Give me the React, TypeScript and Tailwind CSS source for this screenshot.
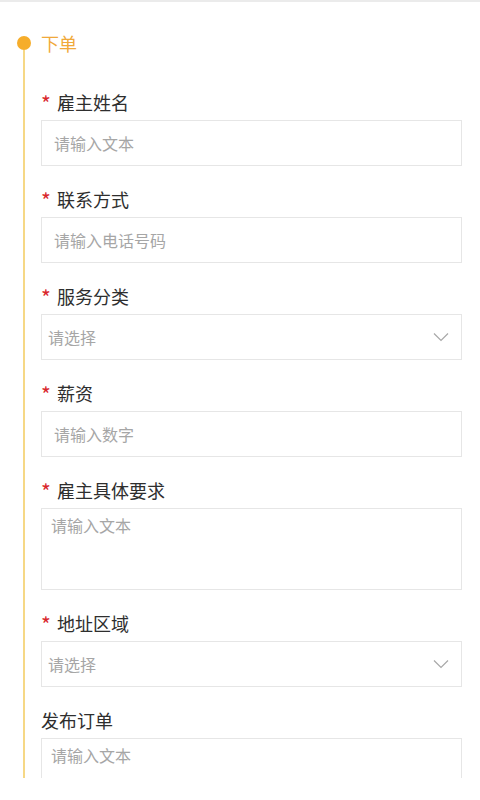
import React from 'react';

const font = { fontFamily: '"Noto Sans CJK SC", "Noto Sans", sans-serif' };

type Field = { label: string; required?: boolean; kind: 'input' | 'select' | 'textarea'; placeholder: string; tall?: boolean };

const fields: Field[] = [
    { label: '雇主姓名', required: true, kind: 'input', placeholder: '请输入文本' },
    { label: '联系方式', required: true, kind: 'input', placeholder: '请输入电话号码' },
    { label: '服务分类', required: true, kind: 'select', placeholder: '请选择' },
    { label: '薪资', required: true, kind: 'input', placeholder: '请输入数字' },
    { label: '雇主具体要求', required: true, kind: 'textarea', placeholder: '请输入文本', tall: true },
    { label: '地址区域', required: true, kind: 'select', placeholder: '请选择' },
    { label: '发布订单', kind: 'textarea', placeholder: '请输入文本' },
];

const Chevron = () => (
    <svg width="16" height="10" viewBox="0 0 16 10" fill="none">
        <polyline points="1,1.5 8,8.5 15,1.5" stroke="#a8a8a8" strokeWidth="1.2" strokeLinejoin="miter" />
    </svg>
);

const FieldBox = ({ f }: { f: Field }) => {
    if (f.kind === 'select') {
        return (
            <div className="h-[46px] w-[421px] border border-[#e6e6e6] flex items-center justify-between pl-[6px] pr-[12px] bg-white">
                <span className="text-[16px] leading-[22px] text-[#a6a6a6]">{f.placeholder}</span>
                <Chevron />
            </div>
        );
    }
    if (f.kind === 'textarea') {
        return (
            <textarea
                readOnly
                placeholder={f.placeholder}
                style={font}
                className={`block w-[421px] ${f.tall ? 'h-[82px]' : 'h-[60px]'} border border-[#e6e6e6] pl-[9px] pt-[5px] text-[16px] leading-[22px] resize-none outline-none placeholder:text-[#a6a6a6] bg-white`}
            />
        );
    }
    return (
        <input
            readOnly
            placeholder={f.placeholder}
            style={font}
            className="block h-[46px] w-[421px] border border-[#e6e6e6] px-[12px] text-[16px] outline-none placeholder:text-[#a6a6a6] bg-white"
        />
    );
};

export default function App() {
    return (
        <div style={font} className="w-[480px] h-[800px] bg-white border-t-[2px] border-[#ebebeb]">
            <div className="h-[776px] overflow-hidden flex">
                {/* timeline */}
                <div className="w-[41px] shrink-0 flex flex-col pl-[17px] pt-[34px]">
                    <div className="w-[14px] h-[14px] rounded-full bg-[#f6ad2b]" />
                    <div className="w-[2px] ml-[6px] flex-1 bg-[#f6d886]" />
                </div>

                <div className="flex-1 pt-[29px]">
                    <div className="h-[24px] flex items-center text-[18px] leading-[24px] text-[#f0a93a]">下单</div>

                    <div className="mt-[35px] flex flex-col gap-[21px]">
                        {fields.map((f) => (
                            <div key={f.label} className="flex flex-col">
                                <div className="h-[24px] flex items-center text-[18px] leading-[24px] text-[#2e2e2e]">
                                    {f.required && <span className="text-[#d9262c] w-[16px] text-[21px] leading-[24px] mt-[1px]">*</span>}
                                    <span>{f.label}</span>
                                </div>
                                <div className="mt-[6px]">
                                    <FieldBox f={f} />
                                </div>
                            </div>
                        ))}
                    </div>
                </div>
            </div>
        </div>
    );
}
